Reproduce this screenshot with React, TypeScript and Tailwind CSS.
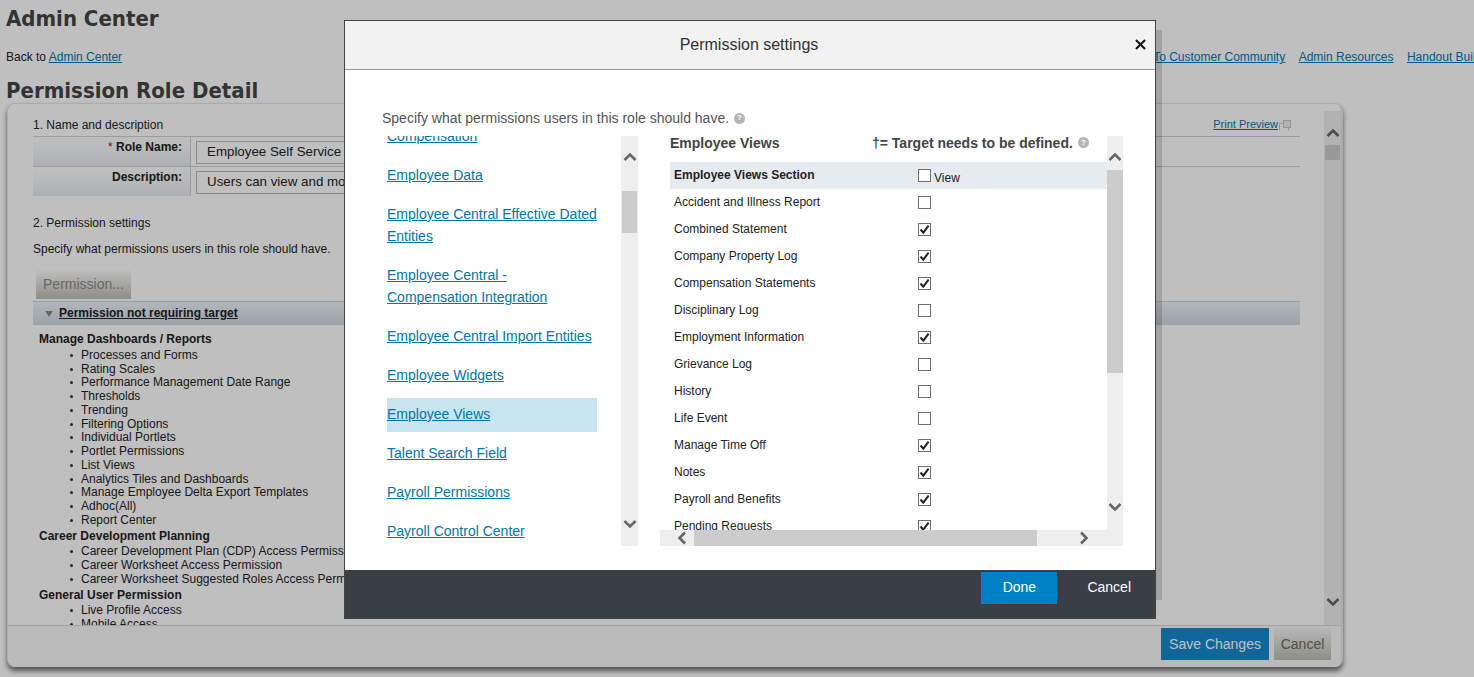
import React from "react";

type Dir = "up" | "down" | "left" | "right";

function Chevron({ dir, className }: { dir: Dir; className: string }) {
  const d: Record<Dir, string> = {
    up: "M1.5 10 L7 4.5 L12.5 10",
    down: "M1.5 4 L7 9.5 L12.5 4",
    left: "M10 1.5 L4.5 7 L10 12.5",
    right: "M4 1.5 L9.5 7 L4 12.5",
  };
  return (
    <svg viewBox="0 0 14 14" className={className} fill="none" stroke="currentColor" strokeWidth="2.6">
      <path d={d[dir]} />
    </svg>
  );
}

function Check({ on }: { on: boolean }) {
  return (
    <span className="flex h-[13px] w-[13px] shrink-0 items-center justify-center border border-[#6e6e6e] bg-white">
      {on && (
        <svg viewBox="0 0 11 11" className="h-[11px] w-[11px]" fill="none" stroke="#222" strokeWidth="2">
          <path d="M1.5 5.5 L4.3 8.6 L9.6 1.6" />
        </svg>
      )}
    </span>
  );
}

function Help() {
  return (
    <span className="inline-flex h-[11px] w-[11px] items-center justify-center rounded-full bg-[#b5b5b5] text-[8px] font-bold leading-none text-white">
      ?
    </span>
  );
}

const groups = [
  {
    title: "Manage Dashboards / Reports",
    items: [
      "Processes and Forms",
      "Rating Scales",
      "Performance Management Date Range",
      "Thresholds",
      "Trending",
      "Filtering Options",
      "Individual Portlets",
      "Portlet Permissions",
      "List Views",
      "Analytics Tiles and Dashboards",
      "Manage Employee Delta Export Templates",
      "Adhoc(All)",
      "Report Center",
    ],
  },
  {
    title: "Career Development Planning",
    items: [
      "Career Development Plan (CDP) Access Permission",
      "Career Worksheet Access Permission",
      "Career Worksheet Suggested Roles Access Permission",
    ],
  },
  { title: "General User Permission", items: ["Live Profile Access", "Mobile Access"] },
];

const navItems = [
  "Compensation",
  "Employee Data",
  "Employee Central Effective Dated Entities",
  "Employee Central - Compensation Integration",
  "Employee Central Import Entities",
  "Employee Widgets",
  "Employee Views",
  "Talent Search Field",
  "Payroll Permissions",
  "Payroll Control Center",
];

const rows: [string, boolean][] = [
  ["Accident and Illness Report", false],
  ["Combined Statement", true],
  ["Company Property Log", true],
  ["Compensation Statements", true],
  ["Disciplinary Log", false],
  ["Employment Information", true],
  ["Grievance Log", false],
  ["History", false],
  ["Life Event", false],
  ["Manage Time Off", true],
  ["Notes", true],
  ["Payroll and Benefits", true],
  ["Pending Requests", true],
];

const heading = "font-['DejaVu_Sans_Condensed','DejaVu_Sans',sans-serif] text-[22px] font-bold text-[#444] whitespace-nowrap";
const pageLink = "text-[#0077b3] underline";

export default function App() {
  return (
    <div className="relative h-[677px] w-[1474px] overflow-hidden bg-white font-['Liberation_Sans',Arial,sans-serif] text-xs text-[#222]">
      <h1 className={`${heading} h-[38px] pl-[6px] leading-[38px]`}>Admin Center</h1>

      <div className="flex h-[38px] items-center whitespace-nowrap">
        <div className="w-[1134px] shrink-0 pl-[6px]">
          Back to <a className={pageLink}>Admin Center</a>
        </div>
        <div className="flex shrink-0 gap-[13.5px]">
          <a className={pageLink}>Go To Customer Community</a>
          <a className={pageLink}>Admin Resources</a>
          <a className={pageLink}>Handout Builder</a>
        </div>
      </div>

      <h2 className={`${heading} h-[27px] pl-[6px] leading-[29px]`}>Permission Role Detail</h2>

      <section className="ml-[7px] flex h-[564px] w-[1336px] flex-col overflow-hidden rounded-lg border-r-2 border-t border-l border-[#e4e4e4] bg-white shadow-[0_4px_5px_rgba(0,0,0,0.55)]">
        <div className="flex h-[521px] shrink-0">
          <div className="h-full w-[1317px] overflow-hidden whitespace-nowrap pl-[25px]">
            <div className="flex h-[32px] w-[1267px] justify-between pr-[8px] pt-[13px] leading-4">
              <span>1. Name and description</span>
              <span className="flex -translate-y-px items-start">
                <a className={`${pageLink} text-[11px]`}>Print Preview</a>
                <svg viewBox="0 0 14 12" className="mt-[4px] h-[12px] w-[14px]" fill="none" stroke="#c8c8c8">
                  <rect x="5.5" y="0.5" width="7" height="7" fill="#eee" />
                  <path d="M1.5 10.5 V3.5 H5.5 M10.5 8 V10.5" />
                </svg>
              </span>
            </div>

            {[
              ["Role Name:", "Employee Self Service", true],
              ["Description:", "Users can view and modify their own information", false],
            ].map(([label, value, req]) => (
              <div key={String(label)} className="flex h-[30px] w-[1267px] border-t border-[#d0d0d0] last:border-b">
                <div className="h-full w-[158px] border-r border-[#d0d0d0] bg-gradient-to-b from-white to-[#e8ecf0] pr-[8px] pt-[3px] text-right font-bold leading-[14px]">
                  {req ? <span className="font-normal text-[#d00]">* </span> : null}
                  {label}
                </div>
                <div className="ml-[5px] mt-[4px] h-[23px] w-[340px] overflow-hidden border border-[#bbb] pl-[10px] text-[13.33px] leading-[20px]">
                  {value}
                </div>
              </div>
            ))}

            <div className="mt-[19px] leading-4">2. Permission settings</div>
            <div className="mt-[10px] leading-4">Specify what permissions users in this role should have.</div>
            <button className="ml-[3px] mt-[12px] block h-[30px] w-[95px] bg-gradient-to-b from-white to-[#bebeb3] text-sm text-[#8a8a8a]">
              Permission...
            </button>
            <div className="mt-[2px] flex h-[24px] w-[1267px] items-center border-t border-[#c6d4e0] bg-gradient-to-b from-[#eef4fa] to-[#d0d9e2] pb-[2px] pl-[11px]">
              <svg viewBox="0 0 10 8" className="mr-[5px] mt-[3px] h-[8px] w-[10px]">
                <path d="M1 1 H9 L5 7 Z" fill="#8a8a8a" />
              </svg>
              <span className="font-bold underline">Permission not requiring target</span>
            </div>

            <div className="pl-[6px] pt-[8px] leading-[13.75px]">
              {groups.map((g) => (
                <div key={g.title} className="mb-[2px]">
                  <div className="font-bold">{g.title}</div>
                  <ul className="mt-[2px] pl-[42px]">
                    {g.items.map((i) => (
                      <li
                        key={i}
                        className="relative before:absolute before:-left-[11px] before:top-[5px] before:h-[3px] before:w-[3px] before:rounded-full before:bg-[#333]"
                      >
                        {i}
                      </li>
                    ))}
                  </ul>
                </div>
              ))}
            </div>
          </div>

          <div className="mt-[7px] flex h-[514px] w-[17px] shrink-0 flex-col items-center bg-[#eeeeee] text-[#666]">
            <Chevron dir="up" className="mt-[15px] h-[14px] w-[14px]" />
            <div className="mt-[5px] h-[15px] w-[15px] bg-[#cccccc]" />
            <Chevron dir="down" className="mt-auto mb-[16px] h-[14px] w-[14px]" />
          </div>
        </div>

        <div className="flex flex-1 justify-end gap-[5px] border-t border-[#d8d8d8] bg-[#f8f8f8] pr-[10px] pt-[2px]">
          <button className="h-[32px] w-[108px] bg-[#1489cc] text-sm text-white">Save Changes</button>
          <button className="h-[32px] w-[57px] bg-gradient-to-b from-[#f4f4f4] to-[#bebeb3] text-sm text-[#6a6a6a]">
            Cancel
          </button>
        </div>
      </section>

      {/* dimming layer of the open dialog */}
      <div className="absolute inset-0 bg-black/25" />
      <div className="absolute left-[1156px] top-[30px] h-[570px] w-[6px] bg-black/15" />

      <div className="absolute left-[344px] top-[20px] flex h-[599px] w-[812px] flex-col border border-[#444] bg-white">
        <header className="flex h-[49px] shrink-0 items-center justify-center border-b border-[#999] bg-[#f2f2f2] pr-[2px] text-base text-[#333]">
          Permission settings
          <svg viewBox="0 0 12 12" className="absolute right-[9px] top-[18px] h-[11px] w-[11px]" fill="none" stroke="#111" strokeWidth="2.2">
            <path d="M1 1 L11 11 M11 1 L1 11" />
          </svg>
        </header>

        <div className="flex-1 pt-[40px]">
          <div className="flex h-4 items-center gap-[5px] pl-[37px] text-sm text-[#555]">
            Specify what permissions users in this role should have. <Help />
          </div>
          <div className="mt-[10px] flex h-[410px]">
            <div className="ml-[42px] h-full w-[210px] overflow-hidden">
              <div className="-mt-[11px] flex flex-col gap-[17px] text-sm leading-[22px]">
                {navItems.map((n) => (
                  <div key={n} className={n === "Employee Views" ? "-mb-[7px] -mt-[5px] bg-[#c8e4f0] pb-[7px] pt-[5px]" : ""}>
                    <a className="text-[#0076a8] underline">{n}</a>
                  </div>
                ))}
              </div>
            </div>
            <div className="ml-[24px] flex h-full w-[17px] flex-col items-center bg-[#eeeeee] text-[#666]">
              <Chevron dir="up" className="mt-[14px] h-[14px] w-[14px]" />
              <div className="mt-[27px] h-[42px] w-[15px] bg-[#cccccc]" />
              <Chevron dir="down" className="mb-[15px] mt-auto h-[14px] w-[14px]" />
            </div>

            <div className="ml-[22px] flex h-full w-[463px] flex-col">
              <div className="flex h-[394px]">
                <div className="w-[447px] overflow-hidden pl-[10px]">
                  <div className="flex h-[26px] items-start text-sm font-bold leading-[14px] text-[#444]">
                    <span className="w-[202px]">Employee Views</span>
                    <span>†= Target needs to be defined.</span>
                    <span className="ml-[5px] mt-[1px] flex"><Help /></span>
                  </div>
                  <div className="flex h-[27px] items-center bg-[#e6ebef] pl-[4px] font-bold">
                    <span className="w-[244px] pb-[2px]">Employee Views Section</span>
                    <Check on={false} />
                    <span className="ml-[3px] mt-[5px] font-normal">View</span>
                  </div>
                  {rows.map(([name, on]) => (
                    <div key={name} className="flex h-[27px] items-center pl-[4px]">
                      <span className="w-[244px] pb-[2px]">{name}</span>
                      <Check on={on} />
                    </div>
                  ))}
                </div>
                <div className="flex w-[16px] flex-col items-center bg-[#eeeeee] text-[#666]">
                  <Chevron dir="up" className="mt-[14px] h-[14px] w-[14px]" />
                  <div className="mt-[6px] h-[203px] w-[16px] bg-[#cccccc]" />
                  <Chevron dir="down" className="mb-[16px] mt-auto h-[14px] w-[14px]" />
                </div>
              </div>
              <div className="flex h-[16px] items-center bg-[#eeeeee] text-[#666]">
                <Chevron dir="left" className="ml-[15px] h-[14px] w-[14px]" />
                <div className="ml-[5px] h-[16px] w-[343px] bg-[#cccccc]" />
                <Chevron dir="right" className="ml-[40px] h-[14px] w-[14px]" />
              </div>
            </div>
          </div>
        </div>

        <footer className="flex h-[48px] shrink-0 items-start justify-end bg-[#393f45] pr-[24px] pt-[2px] text-sm text-white">
          <button className="h-[32px] w-[76px] bg-[#0080c5] pb-[2px]">Done</button>
          <button className="ml-[30px] h-[32px] pb-[2px]">Cancel</button>
        </footer>
      </div>
    </div>
  );
}
